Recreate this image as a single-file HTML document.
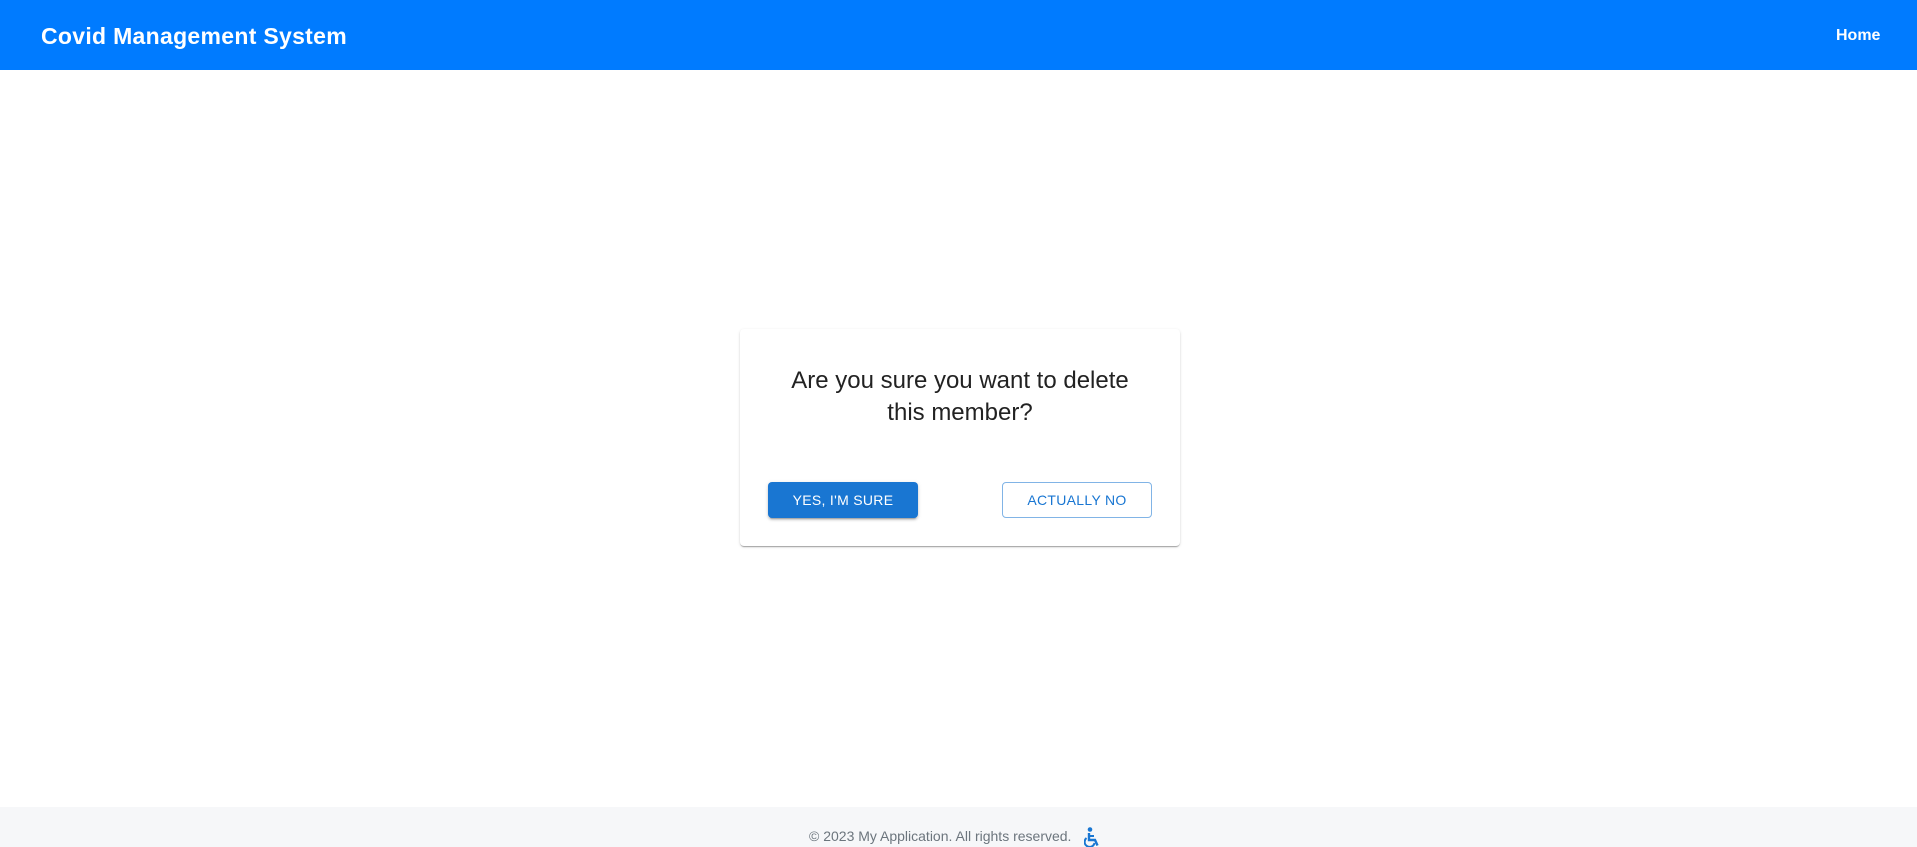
<!DOCTYPE html>
<html><head><meta charset="utf-8"><style>
html,body{margin:0;padding:0;width:1917px;height:847px;overflow:hidden;background:#fff;font-family:"Liberation Sans",sans-serif;}
.nav{position:absolute;left:0;top:0;width:1917px;height:70px;background:#007bff;}
.title{position:absolute;left:41px;top:21px;color:#fff;font-weight:bold;font-size:23px;letter-spacing:0.3px;line-height:30px;}
.home{position:absolute;left:1836px;top:26px;color:#fff;font-weight:bold;font-size:16px;line-height:20px;}
.card{position:absolute;left:740px;top:329px;width:440px;height:217px;border-radius:4px;background:#fff;box-shadow:0 2px 1px -1px rgba(0,0,0,.2),0 1px 1px 0 rgba(0,0,0,.14),0 1px 3px 0 rgba(0,0,0,.12);}
.q{position:absolute;left:0;top:36px;width:440px;text-align:center;font-size:24px;line-height:32px;color:#222;}
.btn{position:absolute;top:153px;width:150px;height:36px;box-sizing:border-box;border-radius:4px;font-size:14px;letter-spacing:.3px;text-align:center;line-height:36px;}
.yes{left:28px;background:#1976d2;color:#fff;box-shadow:0 3px 1px -2px rgba(0,0,0,.2),0 2px 2px 0 rgba(0,0,0,.14),0 1px 5px 0 rgba(0,0,0,.12);}
.no{left:262px;border:1px solid rgba(25,118,210,.55);color:#1976d2;line-height:34px;}
.foot{position:absolute;left:0;top:807px;width:1917px;height:40px;background:#f6f7f9;}
.ft{position:absolute;left:809px;top:20px;font-size:14px;color:#6c757d;line-height:18px;}
</style></head><body>
<div class="nav"><div class="title">Covid Management System</div><div class="home">Home</div></div>
<div class="card">
<div class="q">Are you sure you want to delete<br>this member?</div>
<div class="btn yes">YES, I'M SURE</div>
<div class="btn no">ACTUALLY NO</div>
</div>
<div class="foot"><div class="ft">© 2023 My Application. All rights reserved.</div>
<svg style="position:absolute;left:1084px;top:20px" width="18" height="20" viewBox="0 0 18 20"><circle cx="6" cy="2.5" r="2.3" fill="#1976d2"/><path d="M5 6v7h6l2.5 5.5" stroke="#1976d2" stroke-width="2.4" fill="none"/><path d="M5 9h5" stroke="#1976d2" stroke-width="2"/><path d="M2.5 11a5 5 0 1 0 8 5" stroke="#1976d2" stroke-width="2" fill="none"/></svg>
</div>
</body></html>
